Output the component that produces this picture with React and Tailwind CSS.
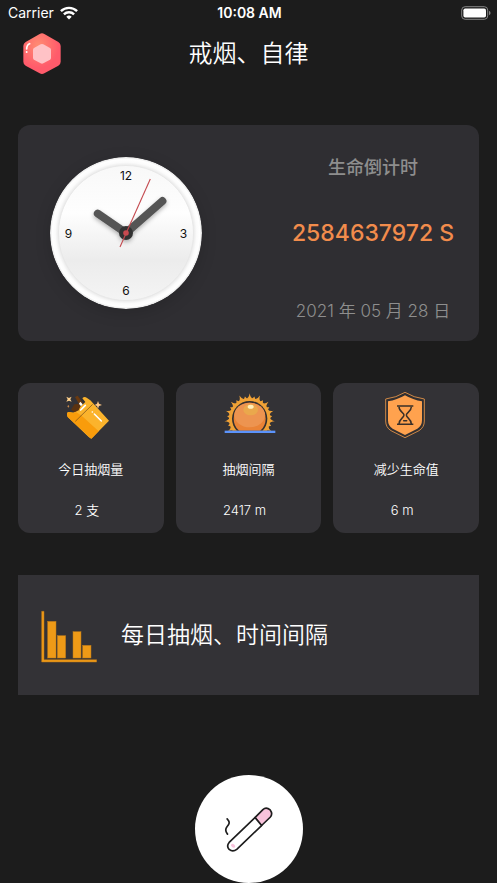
import React from "react";

function WifiIcon() {
  return (
    <svg viewBox="0 0 18 14" className="h-[14px] w-[18px]" fill="none" stroke="#fff" strokeWidth="2.4" aria-hidden="true">
      <path d="M0.9 5.2 A11.6 11.6 0 0 1 17.1 5.2" />
      <path d="M3.9 8.3 A7.3 7.3 0 0 1 14.1 8.3" />
      <path d="M6.3 10.7 A3.9 3.9 0 0 1 11.7 10.7 L9 13.4 Z" fill="#fff" stroke="none" />
    </svg>
  );
}

function BatteryIcon() {
  return (
    <svg viewBox="0 0 30 14" className="h-[14px] w-[30px]" aria-hidden="true">
      <rect x="0.7" y="0.7" width="26" height="12.6" rx="3.4" fill="none" stroke="#858585" />
      <rect x="2.4" y="2.4" width="22.6" height="9.2" rx="1.8" fill="#fff" />
      <path d="M28 4.8 Q29.6 5.6 29.6 7 Q29.6 8.4 28 9.2 Z" fill="#858585" />
    </svg>
  );
}

function GemIcon() {
  return (
    <svg viewBox="68 98 114 126" className="h-[42px] w-[38px]" aria-hidden="true">
      <defs>
        <radialGradient id="gem" cx="0.4" cy="0.3" r="0.55">
          <stop offset="0" stopColor="#ff8d73" />
          <stop offset="1" stopColor="#ff5b6b" />
        </radialGradient>
      </defs>
      <path d="M118 101 Q125 97 132 101 L174 125 Q181 129 181 137 V184 Q181 192 174 196 L132 219 Q125 223 118 219 L76 196 Q69 192 69 184 V137 Q69 129 76 125 Z" fill="url(#gem)" />
      <path d="M121 132 Q125 130 129 132 L149 143 Q152 145 152 149 V172 Q152 176 149 178 L129 189 Q125 191 121 189 L101 178 Q98 176 98 172 V149 Q98 145 101 143 Z" fill="#ffc2c6" />
      <path d="M88 130 Q79 133 79 146" fill="none" stroke="#fff" strokeWidth="5" strokeLinecap="round" />
      <circle cx="79" cy="155" r="2.8" fill="#fff" />
    </svg>
  );
}

function Clock() {
  return (
    <svg viewBox="-76 -76 152 152" className="h-[152px] w-[152px] shrink-0 rounded-full shadow-[0_4px_16px_rgba(0,0,0,0.15)]" role="img" aria-label="时钟">
      <defs>
        <linearGradient id="face" x1="0" y1="0" x2="0" y2="1">
          <stop offset="0" stopColor="#f8f8f8" />
          <stop offset="0.35" stopColor="#fefefe" />
          <stop offset="0.7" stopColor="#ececec" />
          <stop offset="1" stopColor="#f4f4f4" />
        </linearGradient>
        <radialGradient id="bezel" cx="0.5" cy="0.5" r="0.5">
          <stop offset="0.88" stopColor="#e6e6e6" />
          <stop offset="0.93" stopColor="#fbfbfb" />
          <stop offset="0.97" stopColor="#ffffff" />
          <stop offset="1" stopColor="#e4e4e4" />
        </radialGradient>
        <filter id="soft" x="-20%" y="-20%" width="140%" height="140%">
          <feDropShadow dx="0" dy="2" stdDeviation="2" floodOpacity="0.3" />
        </filter>
      </defs>
      <circle r="76" fill="url(#bezel)" />
      <circle r="67.5" fill="url(#face)" stroke="#e8e8e8" />
      <g fill="#111" fontSize="12" textAnchor="middle" className="font-['Inter',sans-serif]">
        <text x="0" y="-53">12</text>
        <text x="57.5" y="5">3</text>
        <text x="0" y="62">6</text>
        <text x="-57.5" y="5">9</text>
      </g>
      <g stroke="#555" strokeWidth="7.8" strokeLinecap="round" filter="url(#soft)">
        <path d="M0 0 L-28.3 -19.5" />
        <path d="M0 0 L36.5 -32" />
        <circle r="7" fill="#333" stroke="none" />
      </g>
      <path d="M-6 14 L24.3 -54" stroke="#c44a50" strokeWidth="1.1" />
      <circle r="2.8" fill="#c94a50" />
    </svg>
  );
}

function PackIcon() {
  return (
    <svg viewBox="159 48 168 144" className="h-12 w-14" aria-hidden="true">
      <path d="M171 119 Q170 112 176 111 L190 113 L226 81 L217 70 Q223 63 230 68 L241 76 L297 137 L244 191 Q240 190 236 186 L173 126 Z" fill="#fbb32c" />
      <path d="M171 119 Q170 112 176 111 L190 113 L199 112 L215 122 L266 169 L244 191 L173 126 Z" fill="#f99c0b" />
      <path d="M183 104 L193 88 L207 86 L212 92 L206 106 L194 112 Z" fill="#5a3210" />
      <path d="M195 66 L203 62 L219 84 L209 90 Z" fill="#6b3a10" />
      <path d="M207 86 L211 80 L218 88 L213 94 Z" fill="#fff" />
      <path d="M196 139 L248 88" stroke="#77501c" strokeWidth="2.2" />
      <path d="M212 105 L226 91" stroke="#fff" strokeWidth="5" strokeLinecap="round" />
      <path d="M253 117 L274 138" stroke="#fff" strokeWidth="4.5" strokeLinecap="round" />
      <circle cx="247" cy="111" r="2.5" fill="#fff" />
      <path d="M169 65 L177 69 L185 65 L181 73 L185 80 L177 77 L169 80 L173 73 Z" fill="#ffd08a" />
      <path d="M264 78 L267 86 L276 90 L267 93 L264 101 L261 93 L254 90 L261 86 Z" fill="#ffc887" />
      <path d="M175 90 L178 94 L175 98 L172 94 Z" fill="#c88a4c" />
    </svg>
  );
}

const rays = Array.from({ length: 11 }, (_, i) => -120 + i * 24);

function SunIcon() {
  return (
    <svg viewBox="151 48 168 144" className="h-12 w-14" aria-hidden="true">
      <defs>
        <clipPath id="horizon">
          <rect x="151" y="48" width="168" height="119" />
        </clipPath>
      </defs>
      <g clipPath="url(#horizon)">
        <g fill="#f0a236">
          {rays.map((a) => (
            <g key={a} transform={`rotate(${a} 240 131)`}>
              <path d="M231 71 Q238 68 240 55 Q242 68 249 71 Z" />
              <path transform="rotate(12 240 131)" d="M235 71 L240 63 L245 71 Z" />
            </g>
          ))}
          <circle cx="240" cy="131" r="62" />
        </g>
        <circle cx="240" cy="131" r="53" fill="#34302f" />
        <circle cx="240" cy="131" r="48" fill="#ea8336" />
        <ellipse cx="240" cy="120" rx="46" ry="37" fill="#ed9450" />
        <ellipse cx="243" cy="104" rx="22" ry="17" fill="#eaa84c" />
        <ellipse cx="243" cy="95" rx="9" ry="6" fill="#fff0bd" />
      </g>
      <rect x="165" y="167" width="152" height="7" fill="#5b93fb" />
    </svg>
  );
}

function ShieldIcon() {
  return (
    <svg viewBox="159 48 168 144" className="h-12 w-14" fill="none" aria-hidden="true">
      <path d="M240 52 Q266 68 298 72 V138 Q298 157 282 167 L240 188 L198 167 Q182 157 182 138 V72 Q214 68 240 52 Z" fill="#312f31" stroke="#e79549" strokeWidth="2.6" />
      <path d="M240 61 Q264 75 291 79 V136 Q291 153 277 161 L240 180 L203 161 Q189 153 189 136 V79 Q216 75 240 61 Z" fill="#ffa24e" />
      <g stroke="#3a3029" strokeWidth="4.5">
        <path d="M216 93 H265 M216 148 H265" />
        <path d="M222 95 C222 111 237 112 237 120 C237 129 222 131 222 147 M259 95 C259 111 244 112 244 120 C244 129 259 131 259 147" />
        <path d="M236 137 H245" strokeLinecap="round" />
      </g>
    </svg>
  );
}

function ChartIcon() {
  return (
    <svg viewBox="93 125 168 168" className="h-14 w-14 shrink-0" aria-hidden="true">
      <g fill="#ee9a17" stroke="#b9771a" strokeWidth="1.5">
        <path d="M95 138 H102 V283 H260 V290 H95 Z" />
        <rect x="113" y="168" width="25" height="110" />
        <rect x="142" y="211" width="25" height="67" />
        <rect x="189" y="199" width="24" height="79" />
        <rect x="218" y="240" width="25" height="38" />
      </g>
    </svg>
  );
}

function CigaretteIcon() {
  return (
    <svg viewBox="132 118 150 142" className="h-[47px] w-[50px]" fill="none" stroke="#1d1d1d" strokeWidth="5" strokeLinecap="round" strokeLinejoin="round" aria-hidden="true">
      <path d="M225 153 L249 129 Q259 120 271 130 Q280 142 271 152 L245 177 Z" fill="#f9c3dc" />
      <path d="M225 153 L147 228 Q138 239 147 249 Q158 258 170 249 L245 177 Z" fill="#fff" />
      <ellipse cx="159" cy="238" rx="7" ry="5" transform="rotate(40 159 238)" fill="#f9c3dc" stroke="none" />
      <path d="M141 157 C151 168 147 173 141 180 C135 187 134 193 142 203" />
    </svg>
  );
}

const stats = [
  { label: "今日抽烟量", value: "2 支", Icon: PackIcon },
  { label: "抽烟间隔", value: "2417 m", Icon: SunIcon },
  { label: "减少生命值", value: "6 m", Icon: ShieldIcon },
];

function StatCard({ label, value, Icon }) {
  return (
    <section className="flex h-[150px] flex-col items-center rounded-xl bg-[#333236] pt-2 text-[13px] leading-5 text-white">
      <Icon />
      <h2 className="mt-5 font-[350]">{label}</h2>
      <p className="mt-[21px] pr-2 font-[350]">{value}</p>
    </section>
  );
}

export default function App() {
  return (
    <div className="flex min-h-screen flex-col bg-[#1c1c1c] font-['Inter','Noto_Sans_CJK_SC',sans-serif] text-white">
      <div className="grid h-[26px] grid-cols-3 items-center pr-1.5 pl-2 text-[14px] leading-4">
        <div className="flex items-center gap-1.5">
          <span>Carrier</span>
          <WifiIcon />
        </div>
        <time className="text-center font-semibold">10:08 AM</time>
        <div className="flex justify-end">
          <BatteryIcon />
        </div>
      </div>

      <header className="grid h-14 grid-cols-[38px_1fr_38px] items-center px-[23px]">
        <button type="button" aria-label="徽章">
          <GemIcon />
        </button>
        <h1 className="text-center text-[24px] leading-8 font-[350]">戒烟、自律</h1>
      </header>

      <main className="flex flex-col gap-[42px] px-[18px] pt-[43px]">
        <section className="flex h-[216px] items-center justify-between rounded-xl bg-[#2f2e32] pl-8">
          <Clock />
          <div className="flex w-[212px] flex-col items-center pt-3 text-[#8e8e8e]">
            <h2 className="text-[18px] leading-6 font-medium">生命倒计时</h2>
            <p className="mt-[37px] text-[23px] leading-8 font-medium text-[#f28c4c]">2584637972 S</p>
            <p className="mt-[50px] text-[17px] leading-6 font-[350]">2021 年 05 月 28 日</p>
          </div>
        </section>

        <div className="grid grid-cols-3 gap-3">
          {stats.map((s) => (
            <StatCard key={s.label} {...s} />
          ))}
        </div>

        <button type="button" className="flex h-[120px] items-center gap-6 bg-[#333236] pl-[23px] text-left text-[23px] leading-8 font-[350]">
          <ChartIcon />
          <span>每日抽烟、时间间隔</span>
        </button>
      </main>

      <div className="mt-auto flex justify-center pt-10">
        <button type="button" aria-label="抽一支烟" className="flex size-[108px] items-center justify-center rounded-full bg-white">
          <CigaretteIcon />
        </button>
      </div>
    </div>
  );
}
